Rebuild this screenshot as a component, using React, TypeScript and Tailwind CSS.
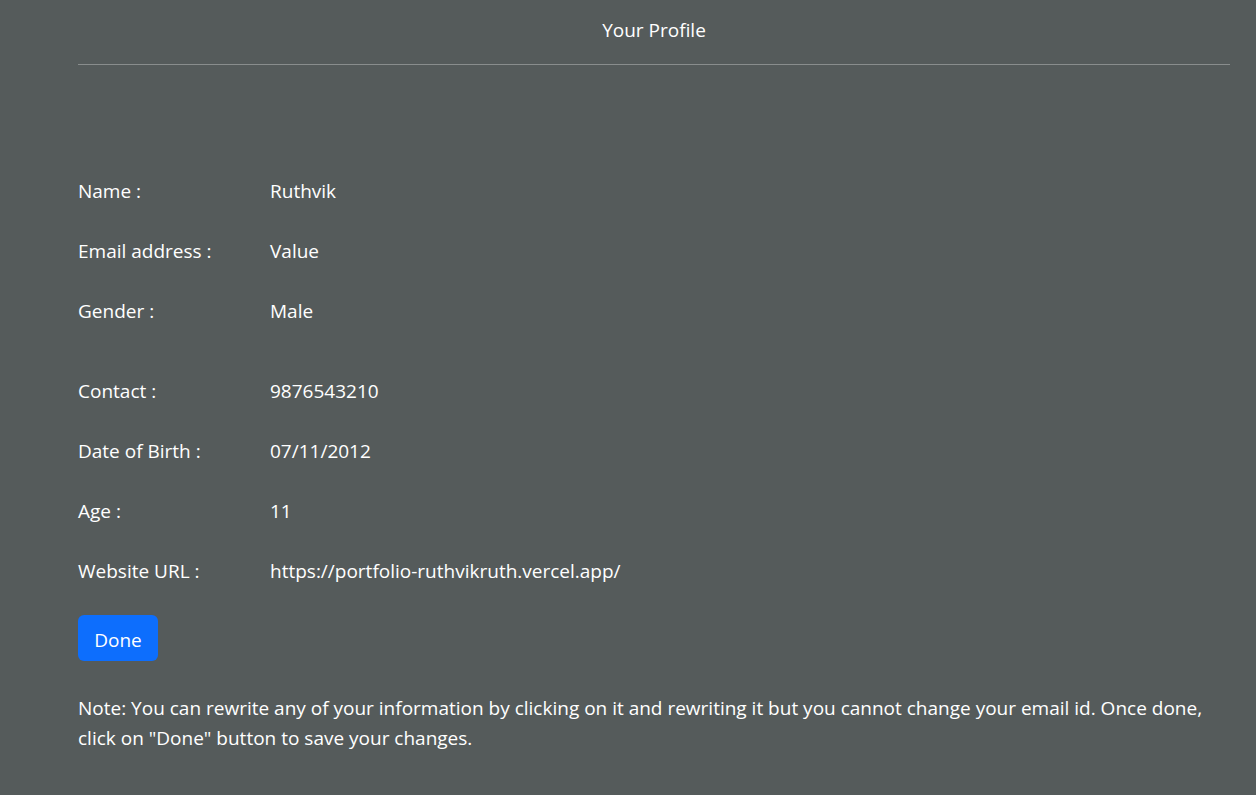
import React from 'react'

interface Field {
  label: string;
  value: string;
}

const topFields: Field[] = [
  { label: 'Name :', value: 'Ruthvik' },
  { label: 'Email address :', value: 'Value' },
  { label: 'Gender :', value: 'Male' },
]

const bottomFields: Field[] = [
  { label: 'Contact :', value: '9876543210' },
  { label: 'Date of Birth :', value: '07/11/2012' },
  { label: 'Age :', value: '11' },
  { label: 'Website URL :', value: 'https://portfolio-ruthvikruth.vercel.app/' },
]

const Row: React.FC<{ field: Field }> = ({ field }) => (
  <div className="flex items-center h-[60px]">
    <span className="w-[192px] shrink-0">{field.label}</span>
    <span>{field.value}</span>
  </div>
)

const App: React.FC = () => {
  return (
    <div
      className="min-h-[795px] bg-[#555b5b] text-white text-[19px] leading-[30px]"
      style={{ fontFamily: '"Open Sans", "Noto Sans", sans-serif' }}
    >
      <div className="mx-[78px] w-[1152px]">
        <div className="pt-[15px] pb-[19px] border-b border-[#898d8d] text-center">
          Your Profile
        </div>
        <div className="pt-[96px]">
          {topFields.map(f => <Row key={f.label} field={f} />)}
          <div className="h-[20px]" />
          {bottomFields.map(f => <Row key={f.label} field={f} />)}
        </div>
        <button
          type="button"
          className="mt-[14px] h-[46px] w-[80px] pt-[3px] rounded-md bg-[#0d6efd] text-white text-[19px]"
        >
          Done
        </button>
        <p className="mt-[32px]">
          Note: You can rewrite any of your information by clicking on it and rewriting it but you cannot change your email id. Once done, click on "Done" button to save your changes.
        </p>
      </div>
    </div>
  )
}

export default App
